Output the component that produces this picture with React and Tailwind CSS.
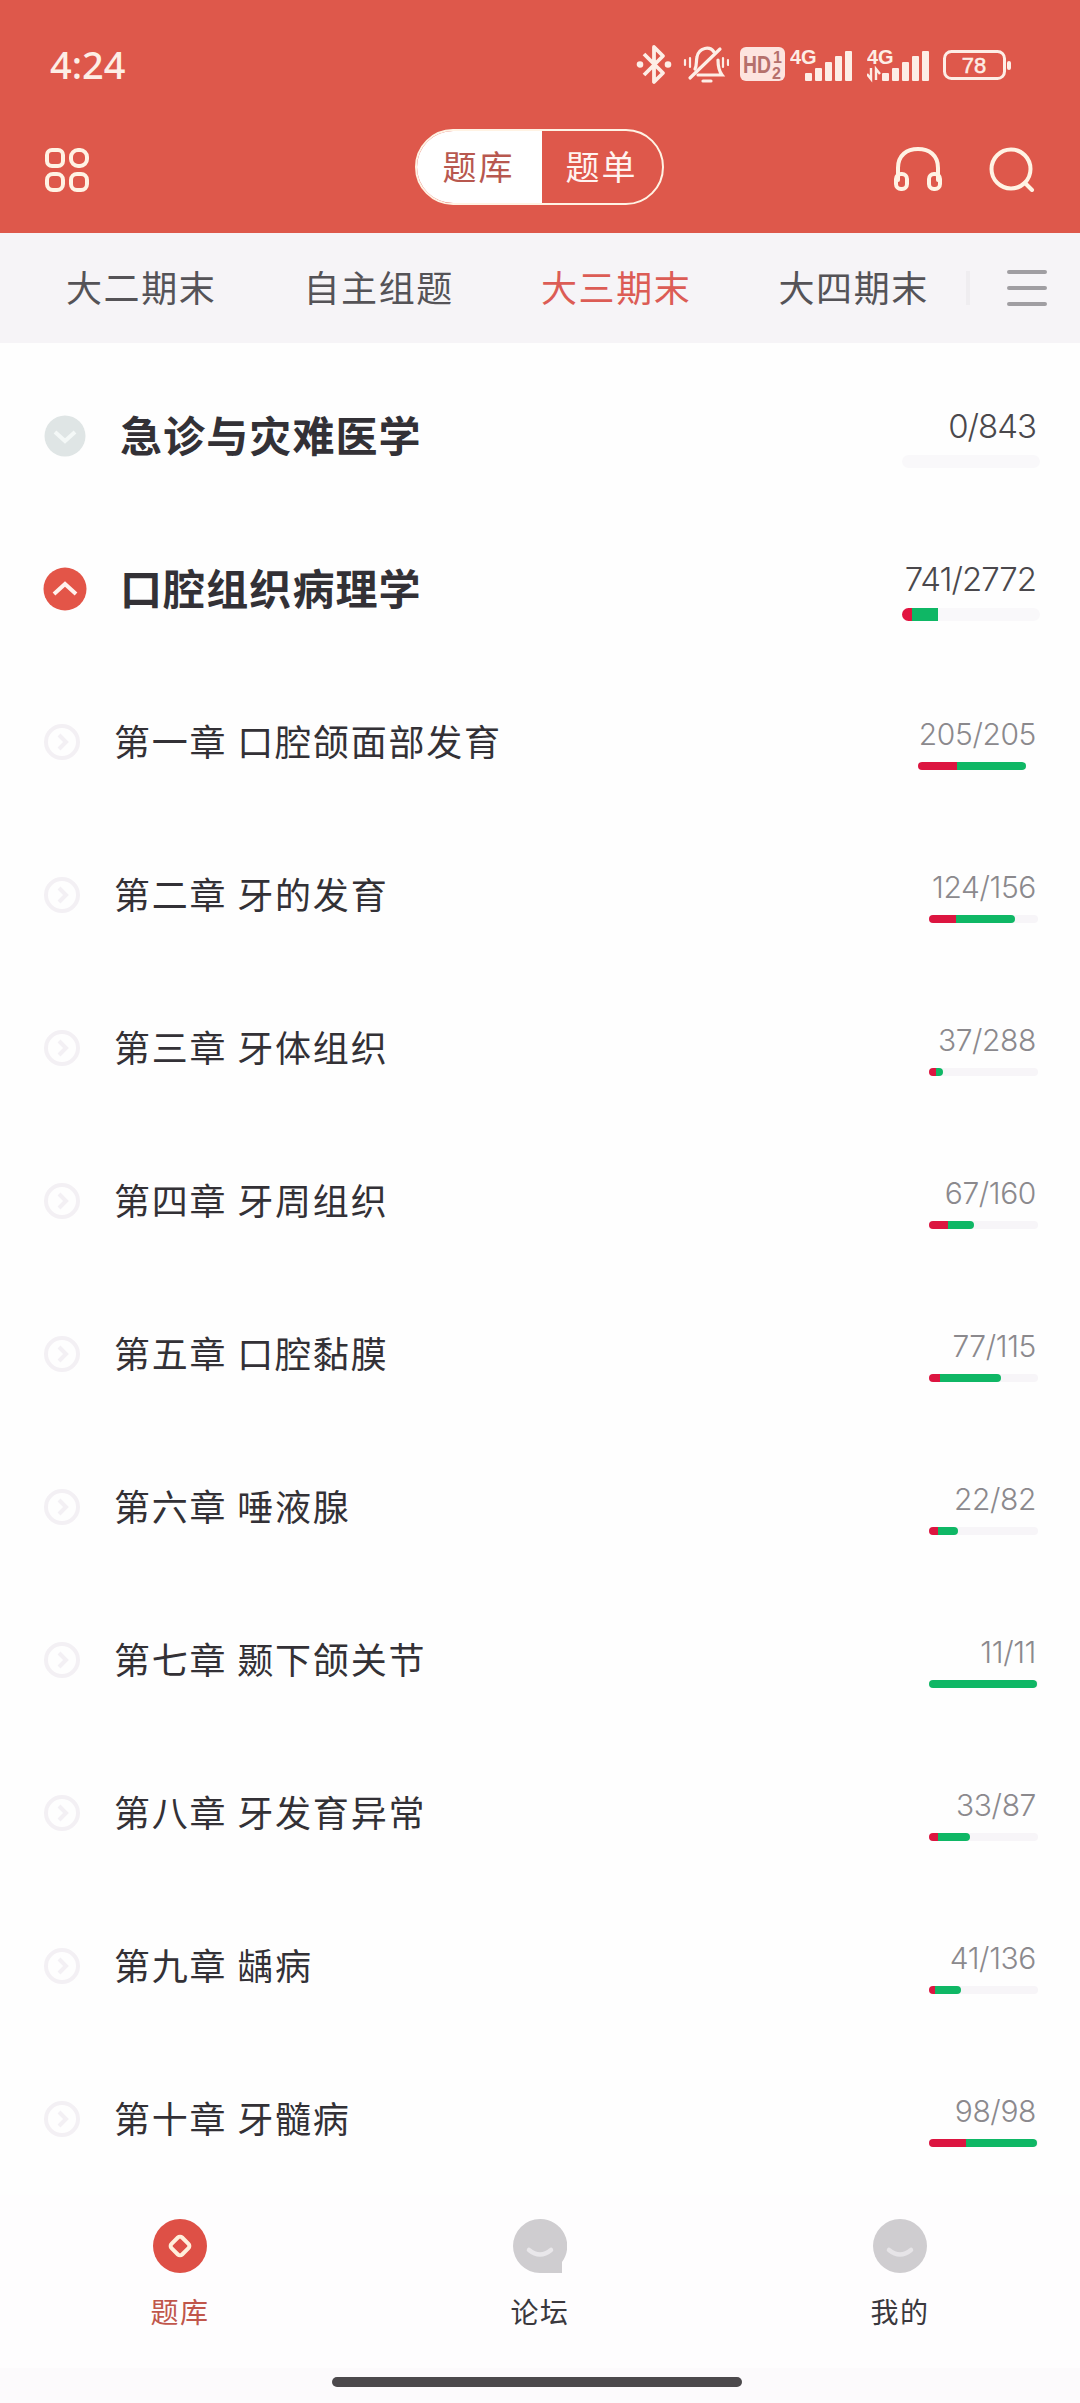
const tabs = ["大二期末", "自主组题", "大三期末", "大四期末"]

// wrong / right are bar widths in px
const chapters = [
  { name: "第一章 口腔颌面部发育", count: "205/205", wrong: 39, right: 69, full: true },
  { name: "第二章 牙的发育", count: "124/156", wrong: 27, right: 59 },
  { name: "第三章 牙体组织", count: "37/288", wrong: 7, right: 7 },
  { name: "第四章 牙周组织", count: "67/160", wrong: 19, right: 26 },
  { name: "第五章 口腔黏膜", count: "77/115", wrong: 11, right: 61 },
  { name: "第六章 唾液腺", count: "22/82", wrong: 9, right: 20 },
  { name: "第七章 颞下颌关节", count: "11/11", wrong: 0, right: 108 },
  { name: "第八章 牙发育异常", count: "33/87", wrong: 9, right: 32 },
  { name: "第九章 龋病", count: "41/136", wrong: 6, right: 26 },
  { name: "第十章 牙髓病", count: "98/98", wrong: 37, right: 71 },
]

function SignalBars() {
  return (
    <g fill="#fdeee6">
      <rect x="15" y="30" width="7" height="8" rx="1" />
      <rect x="25" y="25" width="7" height="13" rx="1" />
      <rect x="35" y="19" width="7" height="19" rx="1" />
      <rect x="45" y="13" width="7" height="25" rx="1" />
      <rect x="55" y="8" width="7" height="30" rx="1" />
    </g>
  )
}

function StatusBar() {
  return (
    <div className="flex h-[129px] items-start justify-between pl-[50px] pr-[68px] pt-[43px] text-[#fdeee6]">
      <span className="font-['Noto_Sans'] text-[38px] font-medium leading-[42px]">4:24</span>
      <div className="flex items-start">
        <svg width="36" height="42" viewBox="0 0 36 42" fill="none" stroke="currentColor" strokeWidth="3.8" strokeLinejoin="round">
          <path d="M8 11 L27 30 L18 39 V4 L27 13 L8 32" />
          <circle cx="4" cy="21.5" r="1.4" fill="currentColor" />
          <circle cx="32" cy="21.5" r="1.4" fill="currentColor" />
        </svg>
        <svg className="ml-[11px]" width="46" height="42" viewBox="0 0 46 42" fill="none" stroke="currentColor" strokeWidth="3.2" strokeLinecap="round">
          <path d="M12 26 C14 22 13 18 14 14 C16 4 27 3 31 9" />
          <path d="M35 17 C35 24 36 28 39 32 H15" />
          <path d="M7 35 L37 6" />
          <path d="M20 38 H28" />
          <path d="M7 15 V24 M2 17 V22 M40 15 V24 M45 17 V22" strokeWidth="2.2" />
        </svg>
        <svg className="ml-[11px]" width="46" height="40" viewBox="0 0 46 40">
          <rect x="0" y="4" width="45" height="34" rx="6" fill="#fde4df" />
          <text x="3" y="30" fontSize="23" fontFamily="Liberation Sans" fontWeight="700" textLength="28" lengthAdjust="spacingAndGlyphs" fill="#b5706c">HD</text>
          <text x="33" y="20" fontSize="16" fontFamily="Liberation Sans" fontWeight="700" fill="#b5706c">1</text>
          <text x="32" y="36" fontSize="16" fontFamily="Liberation Sans" fontWeight="700" fill="#b5706c">2</text>
        </svg>
        <svg className="ml-[4px]" width="62" height="40" viewBox="0 0 62 40">
          <text x="0" y="21" fontSize="20" fontFamily="Liberation Sans" fontWeight="700" fill="currentColor">4G</text>
          <SignalBars />
        </svg>
        <svg className="ml-[15px]" width="62" height="40" viewBox="0 0 62 40">
          <text x="0" y="21" fontSize="20" fontFamily="Liberation Sans" fontWeight="700" fill="currentColor">4G</text>
          <path d="M4 25 V36 L0 31 M9 37 V26 L13 31" fill="none" stroke="currentColor" strokeWidth="2.4" />
          <SignalBars />
        </svg>
        <svg className="ml-[14px]" width="69" height="40" viewBox="0 0 69 40">
          <rect x="1.5" y="8.5" width="60" height="27" rx="7" fill="none" stroke="currentColor" strokeWidth="3" />
          <rect x="64" y="18" width="4" height="9" rx="2" fill="currentColor" />
          <text x="31" y="30" fontSize="22" fontFamily="Liberation Sans" textAnchor="middle" stroke="currentColor" strokeWidth="0.5" fill="currentColor">78</text>
        </svg>
      </div>
    </div>
  )
}

function Header() {
  return (
    <header className="h-[234px] bg-[#de584b]">
      <StatusBar />
      <div className="flex h-[76px] items-center justify-between pl-[45px] pr-[45px] text-[#fff3e4]">
        <div className="flex w-[246px] items-center pt-[6px]">
          <svg width="44" height="44" viewBox="0 0 44 44" fill="none" stroke="currentColor" strokeWidth="4">
            <rect x="2" y="2" width="16" height="16" rx="5" />
            <rect x="26" y="2" width="16" height="16" rx="7" />
            <rect x="2" y="26" width="16" height="16" rx="6" />
            <rect x="26" y="26" width="16" height="16" rx="6" />
          </svg>
        </div>
        <div className="flex h-[76px] w-[249px] overflow-hidden rounded-full border-2 border-[#fff3e4] text-[34px] leading-[70px] tracking-[2px]">
          <div className="w-[125px] bg-white pl-[26px] text-[#b8584f]">题库</div>
          <div className="pl-[24px] text-[#fff3f0]">题单</div>
        </div>
        <div className="flex w-[248px] items-center justify-end gap-[46px] pt-[4px]">
          <svg width="50" height="46" viewBox="0 0 50 46" fill="none" stroke="currentColor" strokeWidth="4" strokeLinecap="round">
            <path d="M5 34 V22 C5 9 14 3 25 3 C36 3 45 9 45 22 V34" />
            <rect x="3" y="28" width="11" height="15" rx="5" />
            <rect x="36" y="28" width="11" height="15" rx="5" />
          </svg>
          <svg width="46" height="46" viewBox="0 0 46 46" fill="none" stroke="currentColor" strokeWidth="4" strokeLinecap="round">
            <circle cx="22" cy="23" r="19.5" />
            <path d="M36 37 L43 44" />
          </svg>
        </div>
      </div>
    </header>
  )
}

function TabBar() {
  return (
    <nav className="flex h-[110px] items-center bg-[#f6f4f7] pl-[66px]">
      {tabs.map(tab => (
        <div
          key={tab}
          className={`w-[237.5px] shrink-0 whitespace-nowrap pb-[3px] text-[36px] leading-[107px] tracking-[1.6px] ${tab === "大三期末" ? "text-[#dc5c55]" : "text-[#555357]"}`}
        >
          {tab}
        </div>
      ))}
      <div className="-ml-[50px] h-[34px] w-[4px] shrink-0 bg-[#efedf0]" />
      <svg className="ml-[37px] shrink-0" width="40" height="36" viewBox="0 0 40 36" stroke="#a09ea2" strokeWidth="4" strokeLinecap="round">
        <path d="M2 2 H38 M2 18 H38 M2 34 H38" />
      </svg>
    </nav>
  )
}

function Subject({ name, count, open, wrong, right }) {
  return (
    <div className="flex h-[153px] items-center pl-[43px] pr-[40px]">
      <svg width="44" height="44" viewBox="0 0 44 44" fill="none">
        <circle cx="22" cy="22" r={open ? 21.5 : 20.5} fill={open ? "#e35548" : "#dfe5e5"} />
        <path d={open ? "M11 27 L22 17 L33 27" : "M12 18 L22 27 L32 18"} stroke={open ? "#fff3ee" : "#f4f8f7"} strokeWidth="4" />
      </svg>
      <h2 className="ml-[33px] pb-[4px] text-[42px] font-bold leading-[60px] tracking-[1.1px] text-[#333136]">{name}</h2>
      <div className="ml-auto flex flex-col items-end pt-[3px]">
        <span className="pr-[4px] font-['Inter'] text-[33px] font-light leading-[40px] tracking-[-1px] text-[#4a484c]">{count}</span>
        <div className="mt-[9px] flex h-[13px] w-[138px] overflow-hidden rounded-full bg-[#f9f8fa]">
          <div className="bg-[#e21440]" style={{ width: wrong }} />
          <div className="bg-[#0fb765]" style={{ width: right }} />
        </div>
      </div>
    </div>
  )
}

function Chapter({ name, count, wrong, right, full }) {
  return (
    <div className="flex h-[153px] items-center pl-[43px] pr-[42px]">
      <svg width="38" height="38" viewBox="0 0 38 38" fill="none" stroke="#f3f0f4" strokeWidth="4">
        <circle cx="19" cy="19" r="16" />
        <path d="M16 12 L23 19 L16 26" />
      </svg>
      <h3 className="ml-[33px] pb-[3px] text-[36px] leading-[52px] tracking-[1.8px] text-[#333136]">{name}</h3>
      <div className="ml-auto flex flex-col items-end pt-[4px]">
        <span className="pr-[2px] font-['Inter'] text-[30px] font-light leading-[36px] tracking-[-0.4px] text-[#8b898d]">{count}</span>
        <div className={`mb-[1px] mt-[10px] flex h-[8px] w-[109px] overflow-hidden rounded-full ${full ? "mr-[11px]" : "bg-[#f7f5f8]"}`}>
          <div className="bg-[#dc1540]" style={{ width: wrong }} />
          <div className="rounded-r-full bg-[#0fb765]" style={{ width: right }} />
        </div>
      </div>
    </div>
  )
}

function BottomNav() {
  return (
    <footer className="flex h-[208px] flex-col bg-[#fefdfe]">
      <div className="grid h-[173px] grid-cols-3 pt-[24px] text-center text-[28px] leading-[42px] tracking-[1.6px] text-[#3a383d]">
        <div className="flex flex-col items-center">
          <svg width="54" height="54" viewBox="0 0 54 54" fill="none">
            <circle cx="27" cy="27" r="27" fill="#de5046" />
            <rect x="19.5" y="19.5" width="15" height="15" rx="3" transform="rotate(45 27 27)" stroke="#fff0dc" strokeWidth="4" />
          </svg>
          <span className="mt-[17px] text-[#c0564b]">题库</span>
        </div>
        <div className="flex flex-col items-center">
          <svg width="54" height="54" viewBox="0 0 54 54" fill="none">
            <path d="M27 0 A27 27 0 1 0 27 54 H49 V43 A27 27 0 0 0 27 0 Z" fill="#cfcdd0" />
            <path d="M16 31 Q27 40 38 31" stroke="#e9e7ea" strokeWidth="4.5" strokeLinecap="round" />
          </svg>
          <span className="mt-[17px]">论坛</span>
        </div>
        <div className="flex flex-col items-center">
          <svg width="54" height="54" viewBox="0 0 54 54" fill="none">
            <circle cx="27" cy="27" r="27" fill="#cfcdd0" />
            <path d="M16 31 Q27 40 38 31" stroke="#e6e4e7" strokeWidth="4.5" strokeLinecap="round" />
          </svg>
          <span className="mt-[17px]">我的</span>
        </div>
      </div>
      <div className="flex h-[35px] bg-[#fcfafc] pl-[332px] pt-[9px]">
        <div className="h-[10px] w-[410px] rounded-full bg-[#4c494c]" />
      </div>
    </footer>
  )
}

export default function App() {
  return (
    <div className="flex h-[2403px] w-[1080px] flex-col overflow-hidden bg-[#fefefe] font-['Noto_Sans_CJK_SC',sans-serif]">
      <Header />
      <TabBar />
      <main className="flex-1 pt-[16px]">
        <Subject name="急诊与灾难医学" count="0/843" wrong={0} right={0} />
        <Subject name="口腔组织病理学" count="741/2772" open wrong={10} right={26} />
        {chapters.map(c => (
          <Chapter key={c.name} {...c} />
        ))}
      </main>
      <BottomNav />
    </div>
  )
}
